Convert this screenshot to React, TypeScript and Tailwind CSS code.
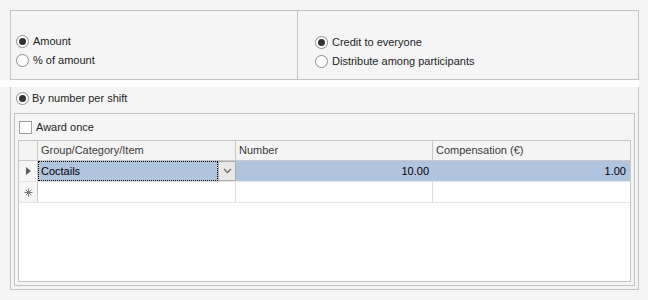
import React from 'react';

function Radio({ checked }: { checked?: boolean }) {
  return (
    <span className="w-[13px] h-[13px] shrink-0 rounded-full border border-[#8c8c8c] bg-white flex items-center justify-center">
      {checked && <span className="w-[7px] h-[7px] rounded-full bg-[#333333]" />}
    </span>
  );
}

function RadioRow({ label, checked, gap = 'gap-[4px]' }: { label: string; checked?: boolean; gap?: string }) {
  return (
    <div className={`h-[19px] flex items-center ${gap}`}>
      <Radio checked={checked} />
      <span>{label}</span>
    </div>
  );
}

function RowArrow() {
  return (
    <svg width="5" height="8" viewBox="0 0 5 8">
      <path d="M0 0 L5 4 L0 8 Z" fill="#5e5e5e" />
    </svg>
  );
}

function NewRowStar() {
  return (
    <svg width="9" height="9" viewBox="0 0 9 9" stroke="#7a7a7a" strokeWidth="1">
      <path d="M4.5 0.5 V8.5 M0.5 4.5 H8.5 M1.7 1.7 L7.3 7.3 M7.3 1.7 L1.7 7.3" />
    </svg>
  );
}

export default function App() {
  return (
    <div className="w-[648px] h-[300px] bg-[#f5f5f5] pt-[10px] font-['Liberation_Sans',Arial,sans-serif] text-[11px] text-[#1e1e1e] leading-none">
      {/* Top options */}
      <div className="ml-[10px] w-[629px] h-[70px] border border-[#c4c4c4] flex">
        <div className="w-[287px] border-r border-[#c4c4c4] flex flex-col pt-[21px] pl-[5px]">
          <RadioRow label="Amount" checked />
          <RadioRow label="% of amount" />
        </div>
        <div className="flex-1 flex flex-col pt-[22px] pl-[17px]">
          <RadioRow label="Credit to everyone" checked />
          <RadioRow label="Distribute among participants" />
        </div>
      </div>

      <div className="h-[7px] w-[639px] bg-white" />

      {/* Lower group */}
      <div className="ml-[10px] w-[629px] h-[203px] border-x border-b border-[#c4c4c4] px-[3px] pb-[3px] flex flex-col">
        <div className="h-[22px] flex items-center gap-[3px] pl-[2px]">
          <Radio checked />
          <span>By number per shift</span>
        </div>

        <div className="mt-[4px] flex-1 border border-[#c4c4c4] px-[3px] pb-[3px] flex flex-col">
          <div className="h-[26px] flex items-center gap-[4px] pl-[1px]">
            <span className="w-[13px] h-[13px] border border-[#a0a0a0] bg-white" />
            <span>Award once</span>
          </div>

          {/* Grid */}
          <div className="flex-1 border border-[#c4c4c4] bg-white flex flex-col">
            <div className="h-[20px] flex border-b border-[#c8c8c8] bg-[#f4f4f4] text-[#3a3a3a]">
              <div className="w-[19px] border-r border-[#c8c8c8]" />
              <div className="w-[198px] border-r border-[#c8c8c8] flex items-center pl-[3px]">Group/Category/Item</div>
              <div className="w-[197px] border-r border-[#c8c8c8] flex items-center pl-[3px]">Number</div>
              <div className="flex-1 flex items-center pl-[3px]">Compensation (€)</div>
            </div>

            <div className="h-[21px] flex border-b border-[#e6e6e6]">
              <div className="w-[19px] border-r border-[#c8c8c8] bg-[#f6f6f6] flex items-center justify-center">
                <RowArrow />
              </div>
              <div className="w-[198px] flex bg-[#b0c4de] text-black">
                <div className="flex-1 border border-dotted border-black flex items-center pl-[2px]">Coctails</div>
                <div className="w-[18px] border border-[#adadad] bg-[#e8e8e8] flex items-center justify-center">
                  <svg width="9" height="6" viewBox="0 0 9 6">
                    <path d="M1 1 L4.5 4.5 L8 1" fill="none" stroke="#707070" strokeWidth="1.4" />
                  </svg>
                </div>
              </div>
              <div className="w-[197px] bg-[#b0c4de] text-black flex items-center justify-end pr-[4px]">10.00</div>
              <div className="flex-1 bg-[#b0c4de] text-black flex items-center justify-end pr-[4px]">1.00</div>
            </div>

            <div className="h-[21px] flex border-b border-[#e6e6e6]">
              <div className="w-[19px] border-r border-[#c8c8c8] bg-[#f6f6f6] flex items-center justify-center">
                <NewRowStar />
              </div>
              <div className="w-[198px] border-r border-[#dcdcdc]" />
              <div className="w-[197px] border-r border-[#dcdcdc]" />
              <div className="flex-1" />
            </div>
          </div>
        </div>
      </div>
    </div>
  );
}
